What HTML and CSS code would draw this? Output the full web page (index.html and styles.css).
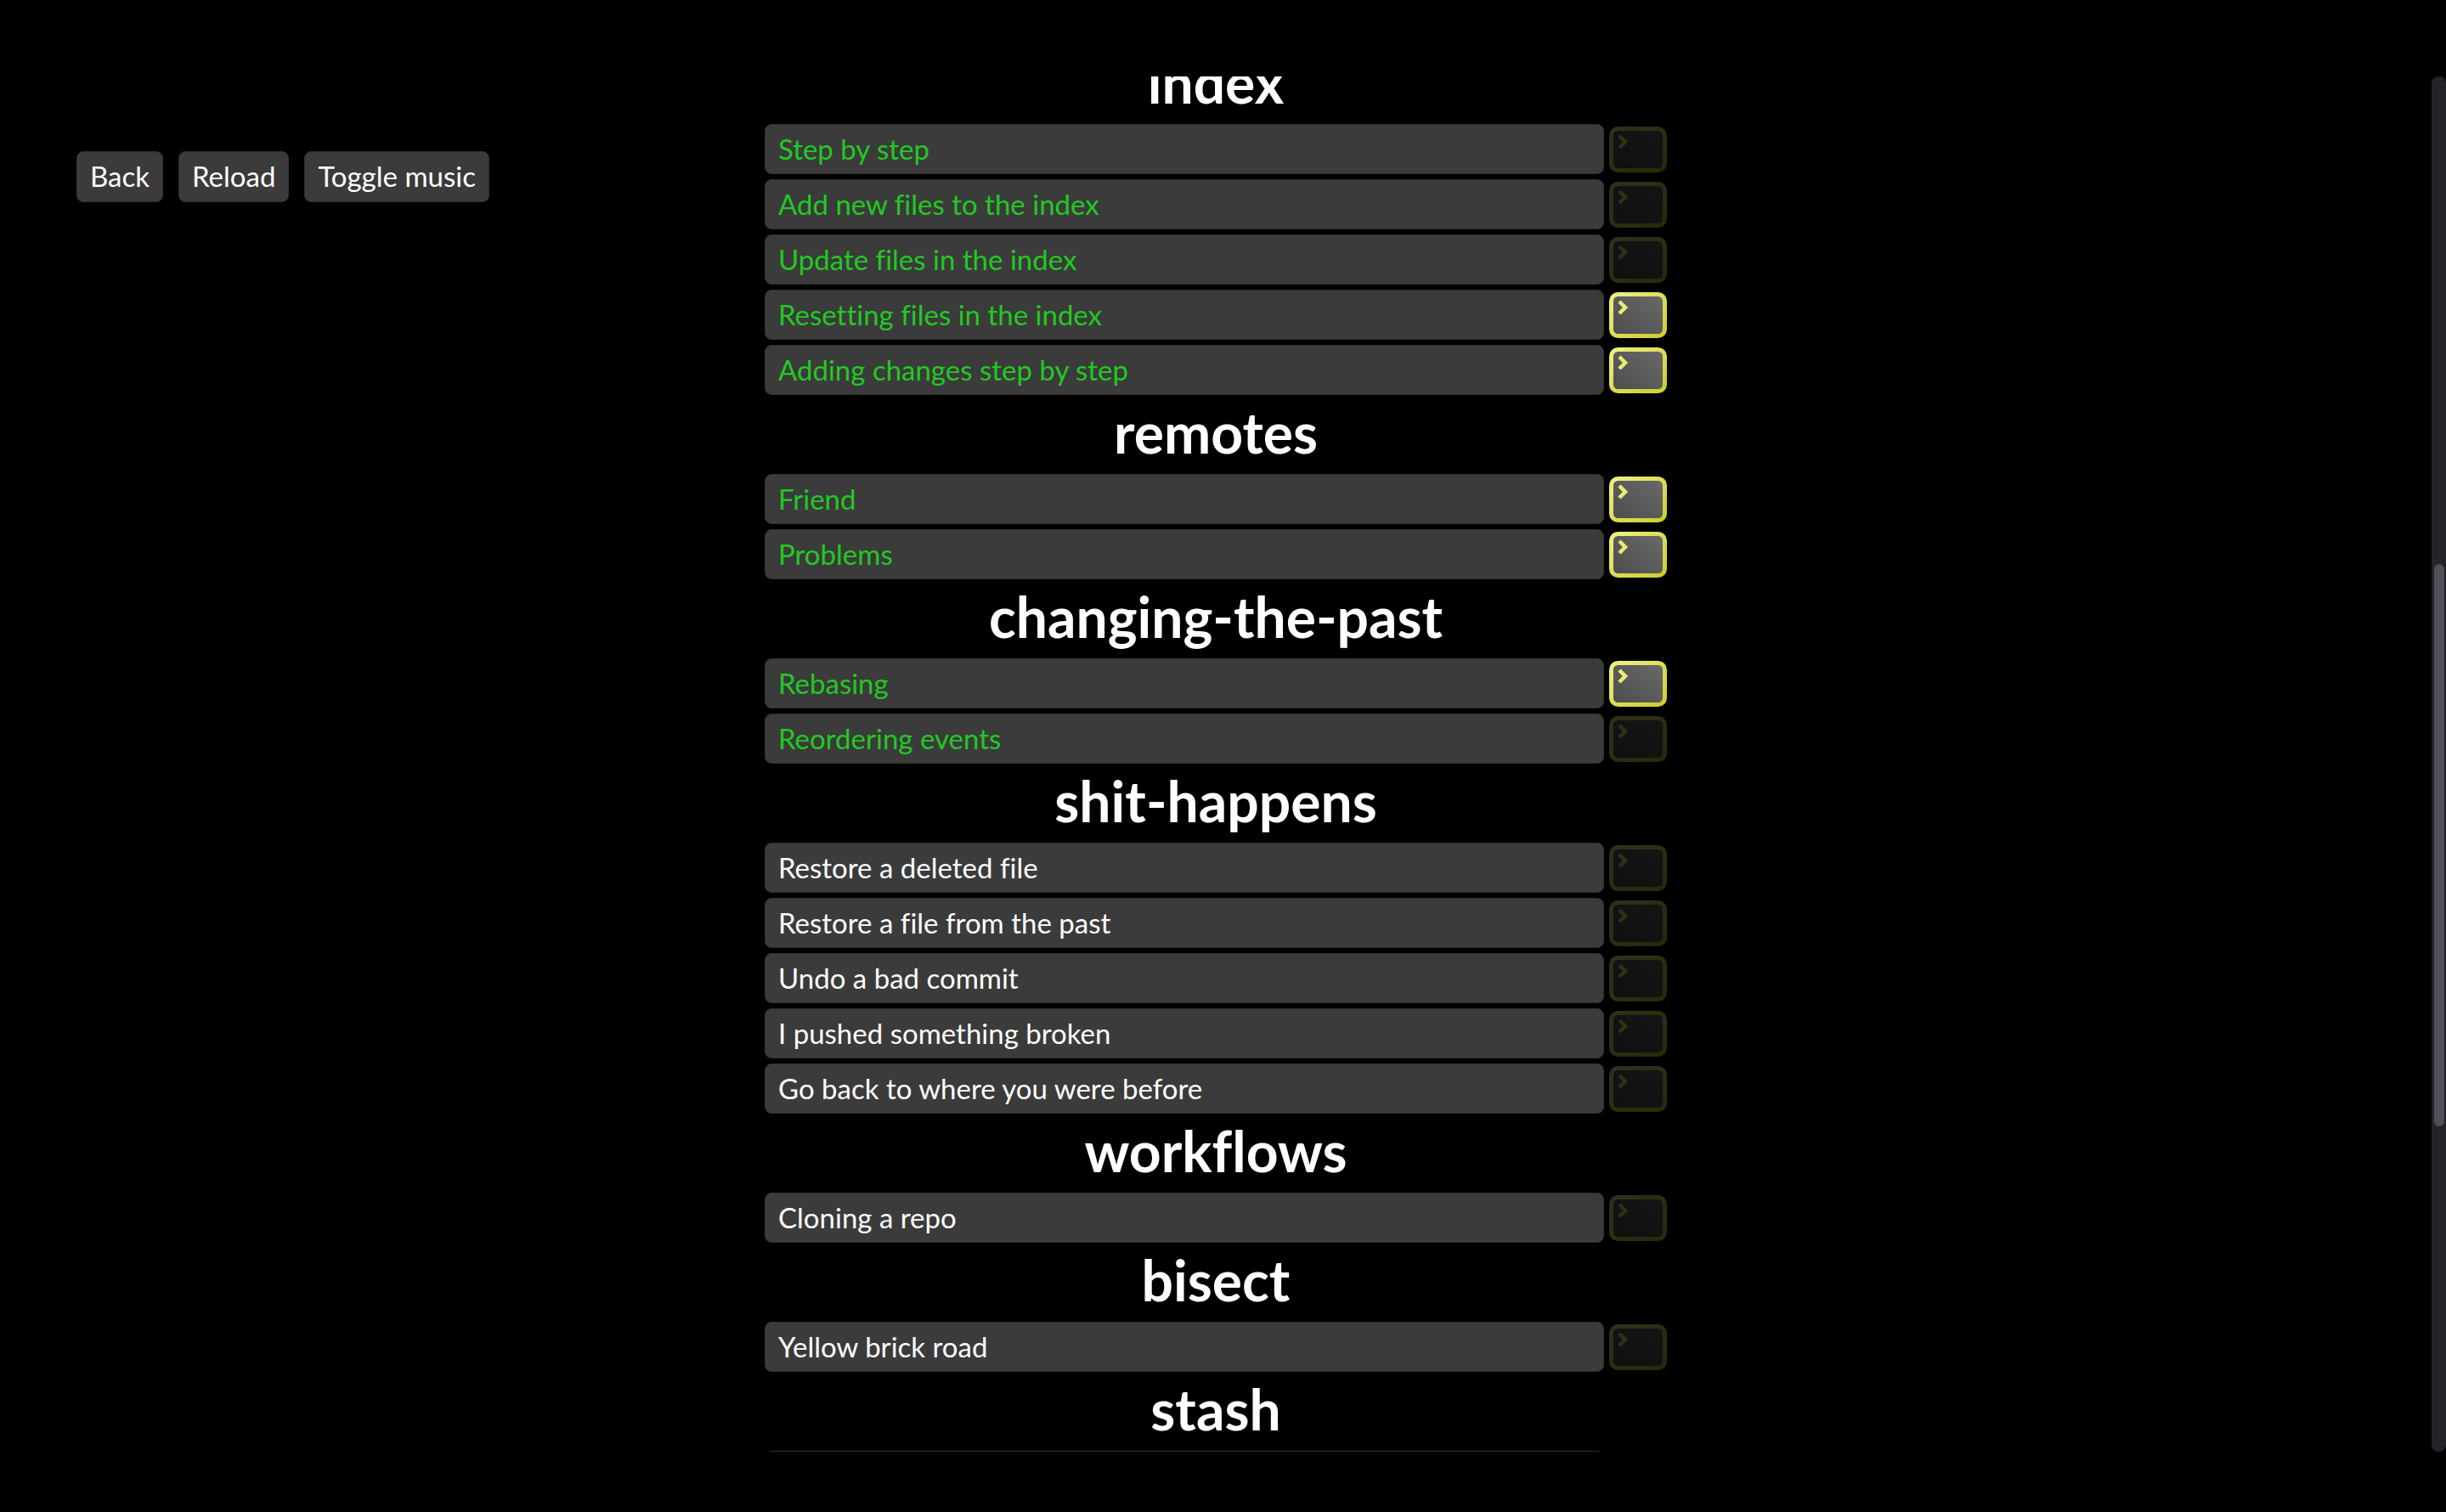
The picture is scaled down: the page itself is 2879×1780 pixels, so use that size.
FILE: index.html
```
<!DOCTYPE html>
<html lang="en">
<head>
<meta charset="utf-8">
<title>Levels</title>
<link rel="stylesheet" href="styles.css">
</head>
<body>
<svg class="defs" width="0" height="0" aria-hidden="true">
  <defs>
    <linearGradient id="frame" x1="0" y1="0" x2="1" y2="1"><stop offset="0" stop-color="#ecf084"/><stop offset="1" stop-color="#cccd2c"/></linearGradient>
    <linearGradient id="screen" x1="0" y1="1" x2="1" y2="0"><stop offset="0" stop-color="#4c4c4c"/><stop offset="1" stop-color="#6a6a6a"/></linearGradient>
    <symbol id="terminal" viewBox="0 0 68 54">
      <rect x="2.5" y="2.5" width="63" height="49" rx="8" fill="url(#screen)" stroke="url(#frame)" stroke-width="5"/>
      <path d="M12 11l7 7-7 7" fill="none" stroke="#e8ec74" stroke-width="4.5"/>
    </symbol>
  </defs>
</svg>
<nav class="menu">
  <button class="btn">Back</button>
  <button class="btn">Reload</button>
  <button class="btn">Toggle music</button>
</nav>
<main class="levels">
  <div class="content">
    <h2>index</h2>
    <ul>
      <li><button class="btn level done">Step by step</button><svg class="badge dim"><use href="#terminal"/></svg></li>
      <li><button class="btn level done">Add new files to the index</button><svg class="badge dim"><use href="#terminal"/></svg></li>
      <li><button class="btn level done">Update files in the index</button><svg class="badge dim"><use href="#terminal"/></svg></li>
      <li><button class="btn level done">Resetting files in the index</button><svg class="badge"><use href="#terminal"/></svg></li>
      <li><button class="btn level done">Adding changes step by step</button><svg class="badge"><use href="#terminal"/></svg></li>
    </ul>
    <h2>remotes</h2>
    <ul>
      <li><button class="btn level done">Friend</button><svg class="badge"><use href="#terminal"/></svg></li>
      <li><button class="btn level done">Problems</button><svg class="badge"><use href="#terminal"/></svg></li>
    </ul>
    <h2>changing-the-past</h2>
    <ul>
      <li><button class="btn level done">Rebasing</button><svg class="badge"><use href="#terminal"/></svg></li>
      <li><button class="btn level done">Reordering events</button><svg class="badge dim"><use href="#terminal"/></svg></li>
    </ul>
    <h2>shit-happens</h2>
    <ul>
      <li><button class="btn level">Restore a deleted file</button><svg class="badge dim"><use href="#terminal"/></svg></li>
      <li><button class="btn level">Restore a file from the past</button><svg class="badge dim"><use href="#terminal"/></svg></li>
      <li><button class="btn level">Undo a bad commit</button><svg class="badge dim"><use href="#terminal"/></svg></li>
      <li><button class="btn level">I pushed something broken</button><svg class="badge dim"><use href="#terminal"/></svg></li>
      <li><button class="btn level">Go back to where you were before</button><svg class="badge dim"><use href="#terminal"/></svg></li>
    </ul>
    <h2>workflows</h2>
    <ul>
      <li><button class="btn level">Cloning a repo</button><svg class="badge dim"><use href="#terminal"/></svg></li>
    </ul>
    <h2>bisect</h2>
    <ul>
      <li><button class="btn level">Yellow brick road</button><svg class="badge dim"><use href="#terminal"/></svg></li>
    </ul>
    <h2>stash</h2>
    <ul>
      <li><button class="btn level"></button><svg class="badge dim"><use href="#terminal"/></svg></li>
    </ul>
  </div>
</main>
<div class="scrollbar"><div class="thumb"></div></div>
</body>
</html>
```
FILE: styles.css
```
* {
  box-sizing: border-box;
}

body {
  margin: 0;
  height: 100vh;
  padding: 90px 0 71px;
  display: grid;
  grid-template-columns: 1fr minmax(0, 1062px) 1fr 17px;
  grid-template-rows: minmax(0, 1fr);
  background: #000;
  color: #fff;
  font-family: Lato, sans-serif;
  font-size: 33px;
  font-variant-ligatures: none;
  overflow: hidden;
}

.defs {
  position: absolute;
}

.menu {
  display: flex;
  align-items: flex-start;
  gap: 18px;
  padding: 88px 0 0 90px;
}

.btn {
  height: 60px;
  padding: 0 15px 2px;
  border: 1px solid #303030;
  border-radius: 8px;
  background: #3b3b3b;
  color: #fff;
  font: inherit;
  font-variant-ligatures: none;
  line-height: 54px;
  white-space: nowrap;
}

.levels {
  overflow: hidden;
}

.content {
  margin-top: -37px;
}

h2 {
  margin: 0;
  height: 93px;
  font-size: 66px;
  font-weight: 700;
  line-height: 88px;
  text-align: center;
}

ul {
  margin: 0;
  padding: 0;
  list-style: none;
  display: grid;
  gap: 6px;
}

li {
  display: flex;
  align-items: center;
  gap: 6px;
}

.level {
  flex: 1;
  height: 59px;
  text-align: left;
}

.done {
  color: #22c922;
}

.badge {
  width: 68px;
  height: 54px;
}

.dim {
  opacity: 0.2;
}

.scrollbar {
  grid-column: 4;
  display: grid;
  grid-template-rows: 574fr 663fr 383fr;
  padding: 0 2px 0 3px;
  border-radius: 8px;
  background: #242329;
}

.thumb {
  grid-row: 2;
  border-radius: 6px;
  background: #504e57;
}
```
